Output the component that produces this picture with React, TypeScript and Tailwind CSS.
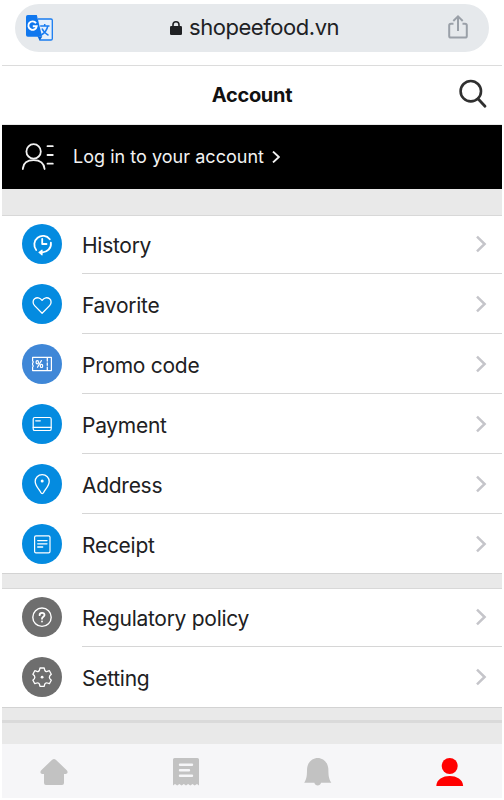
import type { ReactNode } from 'react';

interface MenuItem {
  label: string;
  color: string;
  icon: ReactNode;
}

const line = {
  fill: 'none',
  stroke: 'currentColor',
  strokeLinecap: 'round' as const,
  strokeLinejoin: 'round' as const,
};

// Icons are drawn on the 40px badge grid
const mainItems: MenuItem[] = [
  {
    label: 'History',
    color: 'bg-[#048be0]',
    icon: (
      <g {...line} strokeWidth="1.8">
        <path d="M14.2 26A8.6 8.6 0 1 1 27.8 15.2" />
        <path d="M28.9 18.6A8.6 8.6 0 0 1 19.5 28.3" />
        <path d="M20 26.2L17 28.4L20 30.8Z" fill="currentColor" strokeWidth="1.2" />
        <path d="M20.2 15V20H24.5" />
      </g>
    ),
  },
  {
    label: 'Favorite',
    color: 'bg-[#048be0]',
    icon: (
      <path
        {...line}
        strokeWidth="1.3"
        d="M20.1 29.2L12.6 21.6C10.6 19.5 10.6 16.3 12.6 14.8C14.8 13.1 18 13.4 20.1 16.4C22.2 13.4 25.4 13.1 27.6 14.8C29.6 16.3 29.6 19.5 27.6 21.6Z"
      />
    ),
  },
  {
    label: 'Promo code',
    color: 'bg-[#3f87d7]',
    icon: (
      <g {...line} strokeWidth="1.2">
        <path d="M10.6 13.3H29.4V26.6H10.6V23L11.4 22L10.6 21V19L11.4 18L10.6 17Z" />
        <path d="M25.3 14V17M25.3 18.9V21.3M25.3 23.2V26" strokeWidth="1.3" />
        <ellipse cx="15.3" cy="18.2" rx="1.2" ry="1.6" />
        <ellipse cx="19.5" cy="21.9" rx="1.2" ry="1.6" />
        <path d="M19.4 16.6L15.5 23.3" />
      </g>
    ),
  },
  {
    label: 'Payment',
    color: 'bg-[#048be0]',
    icon: (
      <g {...line} strokeWidth="1.2">
        <rect x="11.2" y="13.5" width="18" height="13" rx="1.6" />
        <path d="M11.2 23.3H29.2M13.7 16.8H18.3" />
      </g>
    ),
  },
  {
    label: 'Address',
    color: 'bg-[#048be0]',
    icon: (
      <>
        <path
          {...line}
          strokeWidth="1.3"
          d="M20.2 10.7C16 10.7 13.2 13.8 13.2 17.4C13.2 21.7 17.2 25.4 18.8 28.5C19.5 29.9 20.9 29.9 21.6 28.5C23.2 25.4 27.2 21.7 27.2 17.4C27.2 13.8 24.4 10.7 20.2 10.7Z"
        />
        <circle cx="20.2" cy="17" r="1.5" fill="currentColor" />
      </>
    ),
  },
  {
    label: 'Receipt',
    color: 'bg-[#048be0]',
    icon: (
      <g {...line} strokeWidth="1.2">
        <rect x="12.6" y="11.8" width="15.4" height="17" rx="1.4" />
        <path d="M15.7 16.6H25M15.7 19.8H25M15.7 23H20.7" strokeWidth="1.3" />
      </g>
    ),
  },
];

const otherItems: MenuItem[] = [
  {
    label: 'Regulatory policy',
    color: 'bg-[#6e6e6e]',
    icon: (
      <g {...line} strokeWidth="1.4">
        <circle cx="20" cy="20.2" r="9.2" />
        <path
          strokeWidth="1.8"
          d="M17.6 18.2C17.6 16.6 18.6 15.8 20 15.8S22.5 16.7 22.5 18C22.5 19.8 20 19.8 20 21.8M20 24.5V24.6"
        />
      </g>
    ),
  },
  {
    label: 'Setting',
    color: 'bg-[#6e6e6e]',
    icon: (
      <>
        <path
          {...line}
          strokeWidth="1.3"
          d="M18 11H22.2L22.8 13.4Q23.6 15 25.3 14.4L27.4 13.7L29.3 17.2L27.8 18.8Q26.9 20.2 27.8 21.6L29.3 23.2L27.4 26.7L25.3 26Q23.6 25.4 22.8 27L22.2 29.4H18L17.4 27Q16.6 25.4 14.9 26L12.8 26.7L10.9 23.2L12.4 21.6Q13.3 20.2 12.4 18.8L10.9 17.2L12.8 13.7L14.9 14.4Q16.6 15 17.4 13.4Z"
        />
        <circle cx="20.1" cy="20.2" r="1.4" fill="currentColor" />
      </>
    ),
  },
];

function Chevron() {
  return (
    <svg viewBox="0 0 12 18" className="mr-[15px] mb-px h-[18px] w-3 text-[#c5c5ca]">
      <path d="M2 1.6L9.6 9L2 16.4" fill="none" stroke="currentColor" strokeWidth="2.5" />
    </svg>
  );
}

function MenuRow({ item, last }: { item: MenuItem; last: boolean }) {
  return (
    <li className="flex h-[60px] shrink-0 pl-5">
      <span
        className={`mt-2.5 flex size-10 shrink-0 items-center justify-center rounded-full text-white ${item.color}`}
      >
        <svg viewBox="0 0 40 40" className="size-10">
          {item.icon}
        </svg>
      </span>
      <div
        className={`ml-5 flex flex-1 items-center justify-between border-b pt-0.5 ${
          last ? 'border-transparent' : 'border-[#d6d6d6]'
        }`}
      >
        <span className="pt-0.5 text-[21px] tracking-[-0.28px] text-[#202022]">{item.label}</span>
        <Chevron />
      </div>
    </li>
  );
}

function MenuList({ items, className }: { items: MenuItem[]; className: string }) {
  return (
    <ul className={`flex flex-col justify-end overflow-hidden border-b border-[#d3d3d3] bg-white ${className}`}>
      {items.map((item, index) => (
        <MenuRow key={item.label} item={item} last={index === items.length - 1} />
      ))}
    </ul>
  );
}

export default function App() {
  return (
    <div className="h-[800px] w-[504px] bg-white px-0.5 font-['Inter',sans-serif]">
      <div className="flex h-[66px] items-start border-b border-[#dcdcdc] px-[13px] pt-1">
        <div className="flex h-12 w-full items-center rounded-full bg-[#e6e9ec] pr-[21px] pl-[11px]">
          <svg viewBox="0 0 28 28" className="size-7">
            <path d="M12 5H25Q26.3 5 26.3 6.3V24.7Q26.3 26 25 26H14L12 22" fill="#e6f0fb" stroke="#1a7cf0" strokeWidth="1.3" />
            <path d="M1.8 1H10.8L16.2 22.8H1.8Q0 22.8 0 21V2.8Q0 1 1.8 1Z" fill="#1077ee" />
            <path d="M12.5 22.8H16.2L13.7 26.5Z" fill="#0b65d0" />
            <path d="M10 9.2A4.2 4.2 0 1 0 10.7 12.3H6.8" fill="none" stroke="#fff" strokeWidth="1.9" />
            <path d="M14.2 12H23.5M18.7 10V12M21.8 12C21 16 18.5 19 15.3 21M16 14.5C17 17 19.5 19.5 22.5 21.3" fill="none" stroke="#1a7cf0" strokeWidth="1.5" />
          </svg>
          <div className="ml-[116px] flex flex-1 items-center">
            <svg viewBox="0 0 12 14" className="-mt-px h-3.5 w-3">
              <rect y="5" width="12" height="9" rx="1.3" fill="#202124" />
              <path d="M3 6V3.8A3 3 0 0 1 9 3.8V6" fill="none" stroke="#202124" strokeWidth="1.6" />
            </svg>
            <span className="ml-[7px] -mt-0.5 text-[22px] leading-7 tracking-[-0.45px] text-[#202124]">
              shopeefood.vn
            </span>
          </div>
          <svg viewBox="0 0 20 24" className="-mt-0.5 h-6 w-5 text-[#9aa0a8]">
            <path
              d="M5.5 8.8H3Q1.2 8.8 1.2 10.6V21Q1.2 22.6 3 22.6H17Q18.8 22.6 18.8 21V10.6Q18.8 8.8 17 8.8H14.5M10 16V1.5M5.3 6L10 1.4L14.7 6"
              fill="none"
              stroke="currentColor"
              strokeWidth="2"
            />
          </svg>
        </div>
      </div>

      <header className="relative flex h-[59px] items-center justify-center border-b border-[#e8e8e8]">
        <h1 className="-mt-px text-xl font-bold tracking-[-0.3px] text-[#111]">Account</h1>
        <svg viewBox="0 0 28 30" className="absolute top-[13px] right-[15px] h-[30px] w-7">
          <circle cx="11.8" cy="12.2" r="10.2" fill="none" stroke="#303030" strokeWidth="2.6" />
          <path d="M19 19.8L26 27.3" stroke="#303030" strokeWidth="2.8" strokeLinecap="round" />
        </svg>
      </header>

      <div className="flex h-16 items-center bg-black pl-5 text-[#f2f2f2]">
        <svg viewBox="0 0 32 28" className="h-7 w-8">
          <g {...line} strokeWidth="1.8">
            <circle cx="11.6" cy="8.4" r="7.2" />
            <path d="M0.8 26C1.2 20 5.6 17.2 11.6 17.2S22 20 22.6 26" />
            <path d="M25.5 3.2H30.8M25.5 12H30.8M25.5 20.7H30.8" />
          </g>
        </svg>
        <span className="ml-[19px] text-lg tracking-[0.03px]">Log in to your account</span>
        <svg viewBox="0 0 8 12" className="ml-2 h-3 w-2">
          <path d="M1 0.6L6.9 6L1 11.4" fill="none" stroke="currentColor" strokeWidth="1.9" />
        </svg>
      </div>

      <div className="h-[27px] border-b border-[#d8d8d8] bg-[#e9e9e9]" />
      <MenuList items={mainItems} className="h-[358px] *:last:-mb-px" />
      <div className="h-[15px] border-b border-[#d8d8d8] bg-[#e9e9e9]" />
      <MenuList items={otherItems} className="h-[119px]" />
      <div className="h-3 bg-[#e9e9e9]" />
      <div className="h-6 border-t-[3px] border-[#dadada] bg-[#e9e9e9]" />

      <nav className="flex h-[54px] items-start bg-[#f6f6f8] pt-3.5 text-[#c2c2c2]">
        <svg viewBox="0 0 28 28" className="ml-[38px] size-7">
          <path
            d="M12.2 1.7Q14 0.3 15.8 1.7L27 12.4Q28.6 15.3 26 16H24V25Q24 27 22 27H6Q4 27 4 25V16H2Q-0.6 15.3 1 12.4Z"
            fill="currentColor"
          />
        </svg>
        <svg viewBox="0 0 26 28" className="ml-[105px] h-7 w-[26px]">
          <path
            d="M1.5 0H24.5Q26 0 26 1.5V27.5L24 26L21.7 27.5L19.5 26L17.3 27.5L15.1 26L13 27.5L10.8 26L8.6 27.5L6.4 26L4.2 27.5L2 26L0 27.5V1.5Q0 0 1.5 0Z"
            fill="currentColor"
          />
          <path d="M7 6.7H19M7 12.3H16M7 17.8H19" stroke="#f6f6f8" strokeWidth="2.4" strokeLinecap="round" />
        </svg>
        <svg viewBox="0 0 28 28" className="ml-[105px] size-7">
          <path
            d="M13.7 0C18.8 0 23.8 4 24.3 10.5C24.6 16 24.2 20 27.3 24.8H17C16.4 28.3 11 28.3 10.4 24.8H0.2C3.3 20 2.8 16 3.1 10.5C3.6 4 8.6 0 13.7 0Z"
            fill="currentColor"
          />
        </svg>
        <svg viewBox="0 0 28 28" className="ml-[104px] size-7 text-[#ff0000]">
          <circle cx="13.7" cy="8" r="8" fill="currentColor" />
          <path d="M0.3 28C0.5 14.7 26.9 14.7 27.1 28Z" fill="currentColor" />
        </svg>
      </nav>
    </div>
  );
}
